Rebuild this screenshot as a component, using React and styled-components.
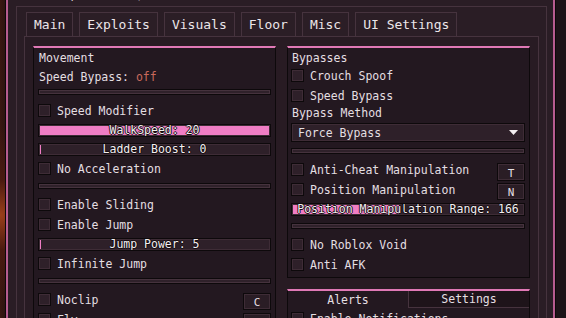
import React from 'react';
import styled, { createGlobalStyle } from 'styled-components';

const GlobalStyle = createGlobalStyle`
  html, body {
    margin: 0;
    padding: 0;
  }
  body {
    width: 566px;
    height: 318px;
    overflow: hidden;
    background:
      radial-gradient(circle at 0 215px, #9a3f1a 0, #4a1a10 35px, rgba(40, 18, 14, 0) 90px),
      linear-gradient(90deg, #3a1711 0, #2a1410 6px, #1c1317 560px);
    font-family: "DejaVu Sans Mono", "Liberation Mono", monospace;
    font-size: 11.5px;
    color: #e4dfe2;
  }
`;

const colors = {
  main: '#2a1d25',
  panel: '#281b23',
  group: '#231820',
  inner: '#2e2029',
  outline: '#46333e',
  dark: '#0d090b',
  accent: '#ef7dc4',
  groupLine: '#e079b6',
  off: '#c8685c',
};

const Window = styled.div`
  margin: -12px 0 0 5px;
  width: 551px;
  box-sizing: border-box;
  border: 1px solid #0c080a;
  box-shadow: inset 0 0 0 2px #b65c8f;
  background: ${colors.main};
  padding: 0 8px 0 10px;
`;

const TitleBar = styled.div`
  height: 17px;
  line-height: 11px;
  padding-left: 40px;
  font-size: 12px;
  white-space: nowrap;
  color: #d8d0d5;
`;

const SectionOuter = styled.div`
  border: 1px solid ${colors.outline};
  background: ${colors.main};
  padding: 5px 7px 0 7px;
  height: 320px;
`;

const TabBar = styled.div`
  display: flex;
  gap: 6px;
  padding-left: 2px;
  height: 24px;
`;

const Tab = styled.div`
  height: 24px;
  box-sizing: border-box;
  padding: 0 7px;
  display: flex;
  align-items: center;
  font-size: 13px;
  border: 1px solid ${colors.outline};
  border-bottom: none;
  background: ${(p) => (p.$active ? colors.panel : '#2b1e26')};
  color: #ece6ea;
`;

const TabPanel = styled.div`
  border: 1px solid ${colors.outline};
  background: ${colors.panel};
  padding: 9px 8px 0 8px;
  display: grid;
  grid-template-columns: 1fr 1fr;
  column-gap: 11px;
  align-items: start;
  height: 300px;
`;

const Column = styled.div`
  display: flex;
  flex-direction: column;
  gap: 11px;
`;

const Groupbox = styled.div`
  display: flex;
  flex-direction: column;
  border: 1px solid ${colors.dark};
  border-top: 2px solid ${colors.groupLine};
  background: ${colors.group};
  padding: 0 4px 6px ${(p) => p.$pl || 4}px;
`;

const GroupTitle = styled.div`
  height: 20px;
  line-height: 20px;
  padding-left: 1px;
`;

const Label = styled.div`
  height: 14px;
  line-height: 14px;
  margin-top: ${(p) => p.$mt || 0}px;
  padding-left: 1px;
`;

const Off = styled.span`
  color: ${colors.off};
`;

const ToggleRow = styled.div`
  display: flex;
  align-items: flex-start;
  justify-content: space-between;
  margin-top: ${(p) => p.$mt || 0}px;
`;

const Toggle = styled.div`
  display: flex;
  align-items: center;
  gap: 6px;
  height: 13px;
  margin-top: ${(p) => p.$mt || 0}px;
  white-space: nowrap;
`;

const Check = styled.div`
  width: 13px;
  height: 13px;
  box-sizing: border-box;
  border: 1px solid ${colors.dark};
  box-shadow: inset 0 0 0 1px #3e2c36;
  background: ${colors.inner};
  flex: none;
`;

const KeyBind = styled.div`
  width: 28px;
  height: ${(p) => p.$h || 17}px;
  box-sizing: border-box;
  border: 1px solid ${colors.dark};
  box-shadow: inset 0 0 0 1px #3e2c36;
  background: ${colors.main};
  display: flex;
  align-items: center;
  justify-content: center;
  padding-top: 2px;
  font-size: 11px;
`;

const SliderTrack = styled.div`
  position: relative;
  height: 13px;
  box-sizing: border-box;
  margin-top: ${(p) => p.$mt || 0}px;
  border: 1px solid ${colors.dark};
  box-shadow: inset 0 0 0 1px #3e2c36;
  background: ${colors.inner};
  overflow: hidden;
`;

const SliderFill = styled.div`
  position: absolute;
  left: 1px;
  top: 1px;
  bottom: 1px;
  background: ${colors.accent};
`;

const SliderText = styled.div`
  position: relative;
  text-align: center;
  line-height: 11px;
  color: #f2eef0;
  white-space: nowrap;
  text-shadow: -1px 0 #140c10, 1px 0 #140c10, 0 -1px #140c10, 0 1px #140c10;
`;

const Divider = styled.div`
  height: 6px;
  box-sizing: border-box;
  margin-top: ${(p) => p.$mt || 0}px;
  border: 1px solid ${colors.dark};
  box-shadow: inset 0 0 0 1px #45323d;
  background: #2f212a;
`;

const Dropdown = styled.div`
  height: 19px;
  box-sizing: border-box;
  margin-top: ${(p) => p.$mt || 0}px;
  border: 1px solid ${colors.dark};
  box-shadow: inset 0 0 0 1px #3e2c36;
  background: ${colors.inner};
  display: flex;
  align-items: center;
  justify-content: space-between;
  padding: 0 6px 0 6px;
`;

const TabBoxHeader = styled.div`
  display: flex;
  height: 17px;
  margin: 0 -4px 0 -3px;
`;

const BoxTab = styled.div`
  flex: 1;
  display: flex;
  align-items: center;
  justify-content: center;
  box-sizing: border-box;
  background: ${(p) => (p.$active ? 'transparent' : '#1e141a')};
  border-left: ${(p) => (p.$active ? 'none' : `1px solid ${colors.outline}`)};
  border-bottom: ${(p) => (p.$active ? 'none' : `1px solid ${colors.outline}`)};
`;

const Slider = ({ label, pct, mt }) => (
  <SliderTrack $mt={mt}>
    <SliderFill style={{ width: `calc(${pct}% - 2px)` }} />
    <SliderText>{label}</SliderText>
  </SliderTrack>
);

const Tog = ({ label, mt }) => (
  <Toggle $mt={mt}>
    <Check />
    <span>{label}</span>
  </Toggle>
);

const tabs = ['Main', 'Exploits', 'Visuals', 'Floor', 'Misc', 'UI Settings'];

const App = () => {
  return (
    <>
      <GlobalStyle />
      <Window>
        <TitleBar>mspaint v3 | DOORS Hotel+</TitleBar>
        <SectionOuter>
          <TabBar>
            {tabs.map((t, i) => (
              <Tab key={t} $active={i === 0}>{t}</Tab>
            ))}
          </TabBar>
          <TabPanel>
            <Column>
              <Groupbox>
                <GroupTitle>Movement</GroupTitle>
                <Label $mt={2}>Speed Bypass: <Off>off</Off></Label>
                <Divider $mt={5} />
                <Tog label="Speed Modifier" mt={9} />
                <Slider label="WalkSpeed: 20" pct={100} mt={7} />
                <Slider label="Ladder Boost: 0" pct={1.5} mt={6} />
                <Tog label="No Acceleration" mt={6} />
                <Divider $mt={8} />
                <Tog label="Enable Sliding" mt={9} />
                <Tog label="Enable Jump" mt={7} />
                <Slider label="Jump Power: 5" pct={1.5} mt={7} />
                <Tog label="Infinite Jump" mt={6} />
                <Divider $mt={8} />
                <ToggleRow $mt={9}>
                  <Tog label="Noclip" />
                  <KeyBind>C</KeyBind>
                </ToggleRow>
                <ToggleRow $mt={3}>
                  <Tog label="Fly" />
                  <KeyBind>F</KeyBind>
                </ToggleRow>
              </Groupbox>
            </Column>
            <Column>
              <Groupbox $pl={3}>
                <GroupTitle>Bypasses</GroupTitle>
                <Tog label="Crouch Spoof" mt={1} />
                <Tog label="Speed Bypass" mt={7} />
                <Label $mt={4}>Bypass Method</Label>
                <Dropdown $mt={3}>
                  <span>Force Bypass</span>
                  <svg width="9" height="5" viewBox="0 0 9 5">
                    <path d="M0 0 H9 L4.5 5 Z" fill="#f2eef0" />
                  </svg>
                </Dropdown>
                <Divider $mt={6} />
                <ToggleRow $mt={9}>
                  <Tog label="Anti-Cheat Manipulation" />
                  <KeyBind $h={18}>T</KeyBind>
                </ToggleRow>
                <ToggleRow $mt={2}>
                  <Tog label="Position Manipulation" />
                  <KeyBind>N</KeyBind>
                </ToggleRow>
                <Slider label="Position Manipulation Range: 166" pct={46.5} mt={3} />
                <Divider $mt={7} />
                <Tog label="No Roblox Void" mt={9} />
                <Tog label="Anti AFK" mt={7} />
              </Groupbox>
              <Groupbox $pl={3}>
                <TabBoxHeader>
                  <BoxTab $active>Alerts</BoxTab>
                  <BoxTab>Settings</BoxTab>
                </TabBoxHeader>
                <Tog label="Enable Notifications" mt={4} />
                <Tog label="Notification Sound" mt={7} />
              </Groupbox>
            </Column>
          </TabPanel>
        </SectionOuter>
      </Window>
    </>
  );
};

export default App;
